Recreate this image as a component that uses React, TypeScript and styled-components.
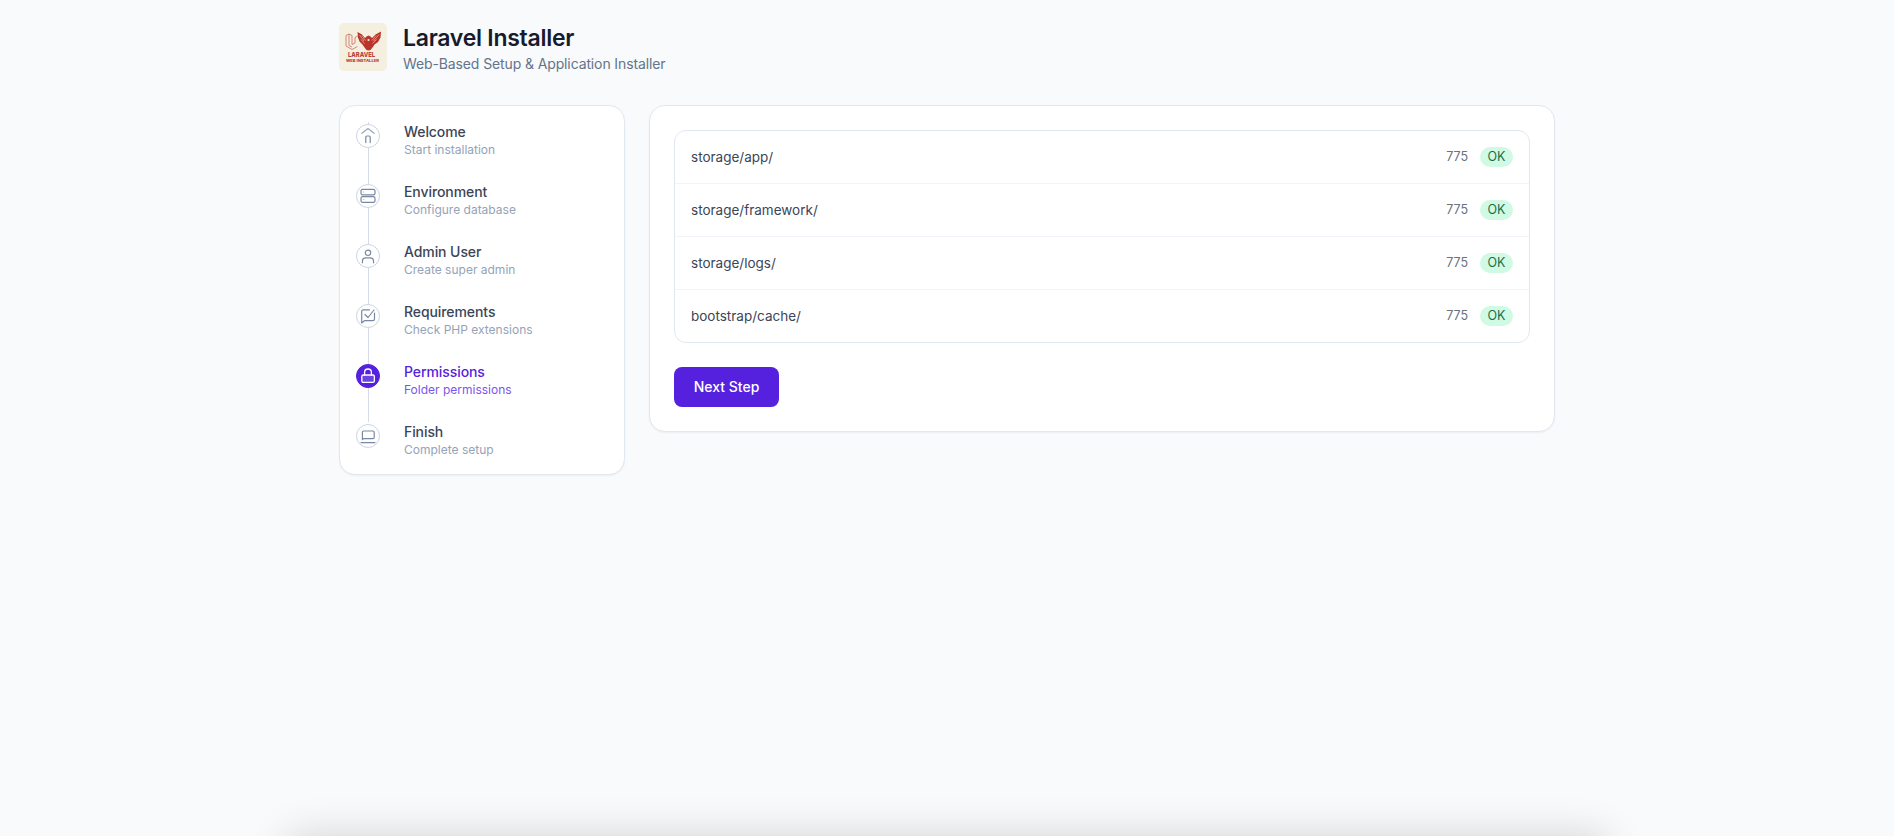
import React from "react";
import styled, { createGlobalStyle } from "styled-components";

const GlobalStyle = createGlobalStyle`
  * {
    box-sizing: border-box;
  }
  html,
  body {
    margin: 0;
    height: 100%;
    overflow: hidden;
    background-color: #f8fafc;
    font-family: "Inter", "Liberation Sans", sans-serif;
  }
`;

const Page = styled.div`
  width: 1216px;
  margin: 0 auto;
  padding-top: 21px;
`;

const Header = styled.header`
  display: flex;
  align-items: center;
  gap: 16px;
  margin-bottom: 32px;
`;

const LogoBox = styled.div`
  width: 48px;
  height: 48px;
  border-radius: 5px;
  background-color: #f4efdf;
`;

const HeaderText = styled.div`
  padding-top: 1px;
`;

const HeaderTitle = styled.h1`
  margin: 0;
  font-size: 23px;
  line-height: 32px;
  font-weight: 600;
  letter-spacing: -0.27px;
  color: #161b2e;
`;

const HeaderSubtitle = styled.p`
  margin: 0;
  font-size: 14px;
  line-height: 19px;
  letter-spacing: -0.12px;
  color: #64748b;
`;

const Columns = styled.div`
  display: grid;
  grid-template-columns: 286px 906px;
  gap: 24px;
  align-items: start;
`;

const Card = styled.div`
  background-color: #fff;
  border: 1px solid #e2e8f0;
  border-radius: 16px;
  box-shadow: 0 1px 2px rgba(15, 23, 42, 0.05);
`;

const Sidebar = styled(Card)`
  padding: 16px;
`;

const StepList = styled.ol`
  list-style: none;
  margin: 0;
  padding: 0;
`;

const StepRow = styled.li`
  position: relative;
  display: flex;
  gap: 24px;
  height: 60px;
  &:last-child {
    height: 36px;
  }
`;

const StepLine = styled.span`
  position: absolute;
  left: 12px;
  top: 0;
  width: 1px;
  height: 60px;
  background-color: #d5dbe7;
`;

const StepCircle = styled.span<{ $active: boolean }>`
  position: relative;
  flex: none;
  width: 24px;
  height: 24px;
  margin-top: 2px;
  border-radius: 50%;
  display: flex;
  align-items: center;
  justify-content: center;
  color: ${(p) => (p.$active ? "#fff" : "#7a88a1")};
  background-color: ${(p) => (p.$active ? "#5521de" : "#fff")};
  border: 1px solid ${(p) => (p.$active ? "#5521de" : "#cbd5e1")};
`;

const StepText = styled.div`
  display: flex;
  flex-direction: column;
`;

const StepTitle = styled.span<{ $active: boolean }>`
  font-size: 14px;
  line-height: 20px;
  font-weight: 450;
  letter-spacing: -0.08px;
  color: ${(p) => (p.$active ? "#5521de" : "#3b4557")};
`;

const StepSub = styled.span<{ $active: boolean }>`
  font-size: 12px;
  line-height: 16px;
  color: ${(p) => (p.$active ? "#7a55ee" : "#94a3b8")};
`;

const Main = styled(Card)`
  padding: 24px;
`;

const PermTable = styled.div`
  border: 1px solid #e2e8f0;
  border-radius: 12px;
  overflow: hidden;
  margin-bottom: 24px;
`;

const PermRow = styled.div`
  display: flex;
  align-items: center;
  justify-content: space-between;
  height: 53px;
  padding: 0 16px;
  border-top: 1px solid #f1f5f9;
  &:first-child {
    height: 52px;
    border-top: none;
  }
`;

const PermPath = styled.span`
  font-size: 13.5px;
  color: #3b4557;
`;

const PermRight = styled.div`
  display: flex;
  align-items: center;
  gap: 12px;
`;

const PermCode = styled.span`
  font-size: 12.5px;
  line-height: 18px;
  padding-bottom: 1px;
  color: #6b7280;
`;

const Badge = styled.span`
  height: 20px;
  width: 33px;
  text-align: center;
  border-radius: 10px;
  background-color: #d1fae5;
  color: #1a7048;
  font-size: 12.5px;
  line-height: 20px;
`;

const NextButton = styled.button`
  display: block;
  height: 40px;
  width: 105px;
  padding: 0 0 2px;
  border: none;
  border-radius: 8px;
  background-color: #5521de;
  color: #fff;
  font-family: inherit;
  font-size: 14px;
  font-weight: 450;
`;

const OffscreenToast = styled.div`
  position: fixed;
  left: 292px;
  top: calc(100% + 4px);
  width: 1310px;
  height: 40px;
  box-shadow: 0 0 40px 4px rgba(0, 0, 0, 0.16);
`;

const Icon: React.FC<{ children: React.ReactNode }> = ({ children }) => (
  <svg
    width="16"
    height="16"
    viewBox="0 0 16 16"
    fill="none"
    stroke="currentColor"
    strokeWidth="1.2"
    strokeLinecap="round"
    strokeLinejoin="round"
    overflow="visible"
  >
    {children}
  </svg>
);

const steps = [
  {
    title: "Welcome",
    sub: "Start installation",
    icon: (
      <>
        <path d="M1.9 5.3 8 .6l6.1 4.7" opacity="0.75" />
        <path d="M5.8 14.6V9.4Q5.8 8 7 8h2q1.2 0 1.2 1.4v5.2" />
      </>
    ),
  },
  {
    title: "Environment",
    sub: "Configure database",
    icon: (
      <>
        <rect x="1" y="1.4" width="14" height="5.4" rx="1.6" />
        <rect x="1" y="8.6" width="14" height="5.8" rx="1.6" />
        <path d="M3.4 4h.4M3.4 11.5h.4" opacity="0.5" />
      </>
    ),
  },
  {
    title: "Admin User",
    sub: "Create super admin",
    icon: (
      <>
        <circle cx="8" cy="4.8" r="2.7" />
        <path d="M2.4 14.8v-1.4q0-3.6 3.6-3.6h4q3.6 0 3.6 3.6v1.4" />
      </>
    ),
  },
  {
    title: "Requirements",
    sub: "Check PHP extensions",
    icon: (
      <>
        <path d="M9.5 1.8H3.5Q1.7 1.8 1.7 3.6V15l2.8-2.3h8.3q1.7 0 1.7-1.7V5" />
        <path d="M5 6.5 8 9.5 14 2" />
      </>
    ),
  },
  {
    title: "Permissions",
    sub: "Folder permissions",
    icon: (
      <>
        <rect x="1.8" y="7" width="12.6" height="7.4" rx="1.6" fill="#fff" fillOpacity="0.15" strokeWidth="1.3" />
        <path d="M4.6 7V4.4a3.4 3.4 0 0 1 6.8 0V7" strokeWidth="1.3" />
      </>
    ),
  },
  {
    title: "Finish",
    sub: "Complete setup",
    icon: (
      <>
        <path d="M3.6 3h9.4q1.2 0 1.2 1.2v5.2q0 1.2-1.2 1.2H3.6L2.4 11.6V4.2Q2.4 3 3.6 3Z" />
        <path d="M1 14.6h14" />
      </>
    ),
  },
];

const folders = [
  "storage/app/",
  "storage/framework/",
  "storage/logs/",
  "bootstrap/cache/",
];

const Logo: React.FC = () => (
  <svg width="48" height="48" viewBox="0 0 48 48" fill="none">
    {/* laravel mark, outline only */}
    <path
      d="M7 12.5 10 11 13 12.5V21.5L16 20V14.5L19 13M7 12.5V23L13 26.5 18.5 23.5M10 11V22.5L13 24"
      stroke="#cf6a5e"
      strokeWidth="0.8"
      strokeLinejoin="round"
    />
    {/* eagle */}
    <path
      d="M18.5 9 23 11.5 26 15 27.5 13.5 29.5 12.5 31.5 13.5 33 15 36.5 11.5 42 8.5 41.5 14.5 39 19 35.5 21.5 33.5 24.5 31.5 27 29.5 27.5 27.5 27 25.5 24.5 23.5 21.5 20.5 18.5 19 14.5Z"
      fill="#b8352c"
    />
    <path
      d="M20.5 12 25 18M23 12.5 26.5 17.5M22 16.5 25.5 20.5M40 11.5 34.5 18M37 12.5 33 17.5M37.5 16.5 33.5 20.5"
      stroke="#f4efdf"
      strokeWidth="0.5"
    />
    <circle cx="29.5" cy="17" r="1.1" fill="#f4efdf" />
    <text
      x="22.5"
      y="33.6"
      textAnchor="middle"
      fontFamily="Inter, sans-serif"
      fontWeight="800"
      fontSize="6.8"
      textLength="27"
      lengthAdjust="spacingAndGlyphs"
      fill="#b8403a"
    >
      LARAVEL
    </text>
    <text
      x="23.5"
      y="38.8"
      textAnchor="middle"
      fontFamily="Inter, sans-serif"
      fontWeight="800"
      fontSize="4"
      textLength="33"
      lengthAdjust="spacingAndGlyphs"
      fill="#b8403a"
    >
      WEB INSTALLER
    </text>
  </svg>
);

export default function App() {
  return (
    <>
      <GlobalStyle />
      <Page>
        <Header>
          <LogoBox>
            <Logo />
          </LogoBox>
          <HeaderText>
            <HeaderTitle>Laravel Installer</HeaderTitle>
            <HeaderSubtitle>Web-Based Setup &amp; Application Installer</HeaderSubtitle>
          </HeaderText>
        </Header>
        <Columns>
          <Sidebar>
            <StepList>
              {steps.map((step, i) => (
                <StepRow key={step.title}>
                  {i < steps.length - 1 && <StepLine />}
                  <StepCircle $active={step.title === "Permissions"}>
                    <Icon>{step.icon}</Icon>
                  </StepCircle>
                  <StepText>
                    <StepTitle $active={step.title === "Permissions"}>{step.title}</StepTitle>
                    <StepSub $active={step.title === "Permissions"}>{step.sub}</StepSub>
                  </StepText>
                </StepRow>
              ))}
            </StepList>
          </Sidebar>
          <Main>
            <PermTable>
              {folders.map((folder) => (
                <PermRow key={folder}>
                  <PermPath>{folder}</PermPath>
                  <PermRight>
                    <PermCode>775</PermCode>
                    <Badge>OK</Badge>
                  </PermRight>
                </PermRow>
              ))}
            </PermTable>
            <NextButton>Next Step</NextButton>
          </Main>
        </Columns>
      </Page>
      <OffscreenToast />
    </>
  );
}
